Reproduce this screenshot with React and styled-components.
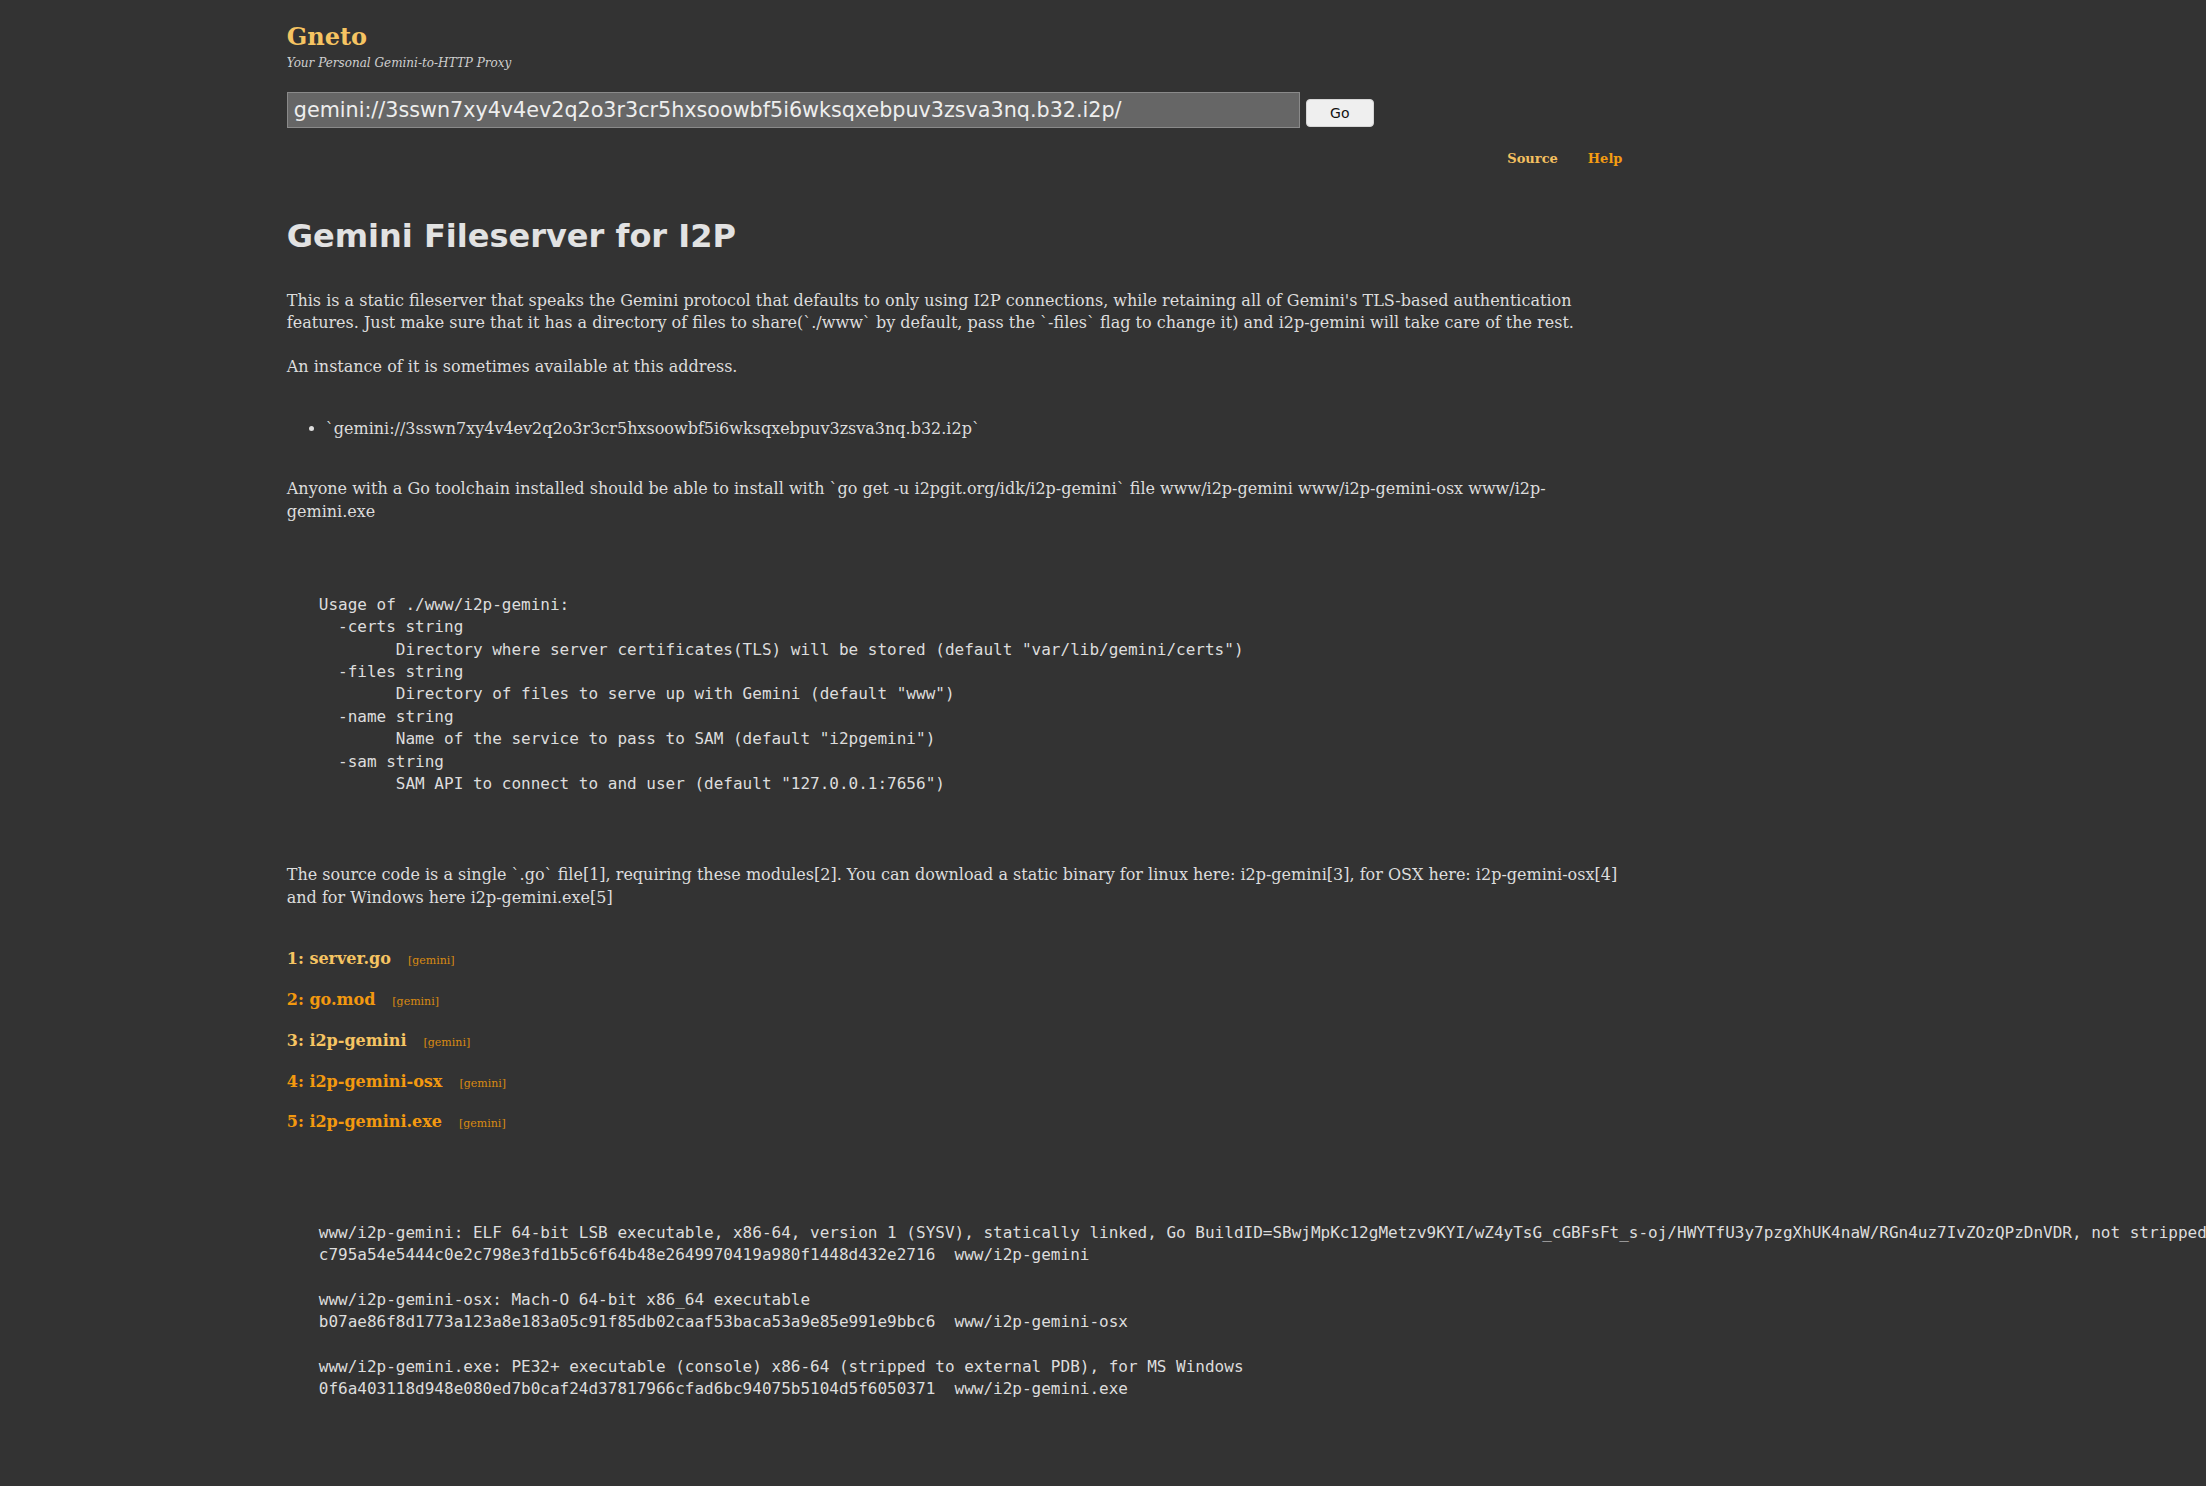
import React from 'react';
import styled, { createGlobalStyle } from 'styled-components';

const GlobalStyle = createGlobalStyle`
  html, body {
    margin: 0;
    padding: 0;
    background: #333333;
    overflow-x: hidden;
  }
  body {
    color: #dddddd;
    font-family: "DejaVu Serif", "Liberation Serif", serif;
    font-size: 16px;
    line-height: 1.4;
  }
`;

const Page = styled.div`
  width: 61%;
  margin: 0 0 0 13%;
  padding: 23px 0 60px;
`;

const Masthead = styled.header`
  display: flex;
  flex-direction: column;
`;

const Brand = styled.a`
  font-family: "DejaVu Serif", serif;
  font-weight: bold;
  font-size: 24px;
  line-height: 1.2;
  color: #f6c462;
  text-decoration: none;
`;

const Tagline = styled.span`
  margin-top: 3px;
  font-style: italic;
  font-size: 12px;
  color: #cfcfcf;
`;

const AddressForm = styled.form`
  display: flex;
  align-items: flex-end;
  gap: 6px;
  margin-top: 20px;
`;

const AddressInput = styled.input`
  box-sizing: border-box;
  width: 1013px;
  height: 36px;
  padding: 0 6px;
  background: #666666;
  border: 1px solid #8a8a8a;
  color: #eeeeee;
  font-family: "DejaVu Sans", sans-serif;
  font-size: 20.7px;
  outline: none;
`;

const GoButton = styled.button`
  box-sizing: border-box;
  width: 68px;
  height: 28px;
  margin-bottom: 1px;
  background: #efefef;
  border: 1px solid #d6d6d6;
  border-radius: 4px;
  color: #111;
  font-family: "DejaVu Sans", sans-serif;
  font-size: 14px;
`;

const Nav = styled.nav`
  display: flex;
  justify-content: flex-end;
  gap: 30px;
  margin-top: 22px;
  padding-right: 10px;
`;

const NavLink = styled.a`
  font-weight: bold;
  font-size: 13px;
  line-height: 1.4;
  color: ${(p) => (p.$visited ? '#f4c060' : '#f39c12')};
  text-decoration: none;
`;

const Title = styled.h1`
  margin: 46px 0 0;
  font-family: "DejaVu Sans", sans-serif;
  font-size: 32px;
  line-height: 1.4;
  color: #e2e2e2;
`;

const Para = styled.p`
  margin: ${(p) => p.$top || 22}px 0 0;
`;

const Bullets = styled.ul`
  margin: 39px 0 0;
  padding-left: 39px;
`;

const Pre = styled.pre`
  margin: ${(p) => p.$top}px 0 0;
  padding-left: 32px;
  font-family: "DejaVu Sans Mono", monospace;
  font-size: 16px;
  line-height: 1.4;
  color: #dddddd;
  white-space: pre;
`;

const LinkList = styled.div`
  display: flex;
  flex-direction: column;
  gap: 18.4px;
  margin-top: 39px;
`;

const LinkRow = styled.div`
  display: flex;
  align-items: baseline;
  gap: 17px;
`;

const LinkMain = styled.a`
  font-weight: bold;
  font-size: 16px;
  color: ${(p) => (p.$visited ? '#f6c462' : '#f3990f')};
  text-decoration: none;
`;

const ProxyTag = styled.a`
  font-size: 11px;
  color: #d98a12;
  text-decoration: none;
`;

const usage = `Usage of ./www/i2p-gemini:
  -certs string
        Directory where server certificates(TLS) will be stored (default "var/lib/gemini/certs")
  -files string
        Directory of files to serve up with Gemini (default "www")
  -name string
        Name of the service to pass to SAM (default "i2pgemini")
  -sam string
        SAM API to connect to and user (default "127.0.0.1:7656")`;

const sums = `www/i2p-gemini: ELF 64-bit LSB executable, x86-64, version 1 (SYSV), statically linked, Go BuildID=SBwjMpKc12gMetzv9KYI/wZ4yTsG_cGBFsFt_s-oj/HWYTfU3y7pzgXhUK4naW/RGn4uz7IvZOzQPzDnVDR, not stripped
c795a54e5444c0e2c798e3fd1b5c6f64b48e2649970419a980f1448d432e2716  www/i2p-gemini

www/i2p-gemini-osx: Mach-O 64-bit x86_64 executable
b07ae86f8d1773a123a8e183a05c91f85db02caaf53baca53a9e85e991e9bbc6  www/i2p-gemini-osx

www/i2p-gemini.exe: PE32+ executable (console) x86-64 (stripped to external PDB), for MS Windows
0f6a403118d948e080ed7b0caf24d37817966cfad6bc94075b5104d5f6050371  www/i2p-gemini.exe`;

const links = [
  { n: 1, name: 'server.go', visited: true },
  { n: 2, name: 'go.mod', visited: false },
  { n: 3, name: 'i2p-gemini', visited: true },
  { n: 4, name: 'i2p-gemini-osx', visited: false },
  { n: 5, name: 'i2p-gemini.exe', visited: false },
];

const App = () => {
  return (
    <>
      <GlobalStyle />
      <Page>
        <Masthead>
          <Brand href="#">Gneto</Brand>
          <Tagline>Your Personal Gemini-to-HTTP Proxy</Tagline>
        </Masthead>

        <AddressForm onSubmit={(e) => e.preventDefault()}>
          <AddressInput
            defaultValue="gemini://3sswn7xy4v4ev2q2o3r3cr5hxsoowbf5i6wksqxebpuv3zsva3nq.b32.i2p/"
          />
          <GoButton type="submit">Go</GoButton>
        </AddressForm>

        <Nav>
          <NavLink href="#" $visited>Source</NavLink>
          <NavLink href="#">Help</NavLink>
        </Nav>

        <Title>Gemini Fileserver for I2P</Title>
        <Para $top={31}>
          This is a static fileserver that speaks the Gemini protocol that defaults to only using I2P connections, while retaining all of Gemini's TLS-based authentication features. Just make sure that it has a directory of files to share(`./www` by default, pass the `-files` flag to change it) and i2p-gemini will take care of the rest.
        </Para>
        <Para>An instance of it is sometimes available at this address.</Para>
        <Bullets>
          <li>`gemini://3sswn7xy4v4ev2q2o3r3cr5hxsoowbf5i6wksqxebpuv3zsva3nq.b32.i2p`</li>
        </Bullets>
        <Para $top={38}>
          Anyone with a Go toolchain installed should be able to install with `go get -u i2pgit.org/idk/i2p-gemini` file www/i2p-gemini www/i2p-gemini-osx www/i2p-gemini.exe
        </Para>

        <Pre $top={71}>{usage}</Pre>

        <Para $top={69}>
          The source code is a single `.go` file[1], requiring these modules[2]. You can download a static binary for linux here: i2p-gemini[3], for OSX here: i2p-gemini-osx[4] and for Windows here i2p-gemini.exe[5]
        </Para>

        <LinkList>
          {links.map((l) => (
            <LinkRow key={l.n}>
              <LinkMain href="#" $visited={l.visited}>{l.n}: {l.name}</LinkMain>
              <ProxyTag href="#">[gemini]</ProxyTag>
            </LinkRow>
          ))}
        </LinkList>

        <Pre $top={88}>{sums}</Pre>
      </Page>
    </>
  );
};

export default App;
